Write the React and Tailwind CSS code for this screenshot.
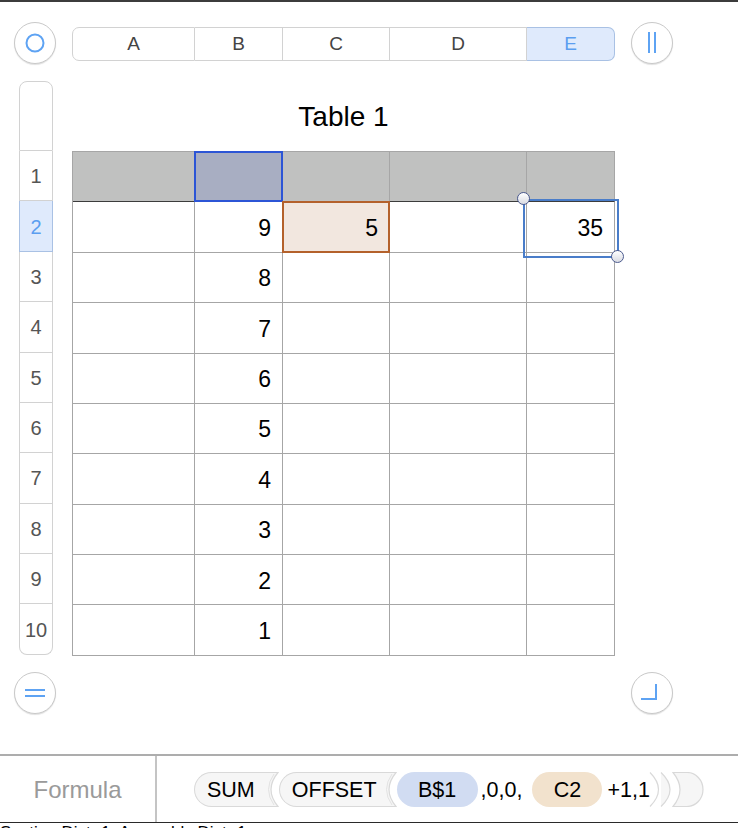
import React from "react";

const cols = [
  { key: "A", w: 123 },
  { key: "B", w: 88 },
  { key: "C", w: 107 },
  { key: "D", w: 137 },
  { key: "E", w: 88 },
];

const colB = [9, 8, 7, 6, 5, 4, 3, 2, 1];

const CircleButton = ({ children }) => (
  <div className="w-[42px] h-[42px] rounded-full border border-[#c9c9c9] bg-white shadow-[0_1px_1px_rgba(0,0,0,0.12)] flex items-center justify-center shrink-0">
    {children}
  </div>
);

const FuncToken = ({ name, pr }) => (
  <div className="flex items-center">
    <span className={"h-[35px] flex items-center rounded-l-full border border-r-0 border-[#d9d9d9] bg-[#f6f6f6] pl-[12px] " + pr}>
      {name}
    </span>
    <svg width="16" height="35" viewBox="0 0 16 35" className="shrink-0">
      <path d="M0 0.5 L15 0.5 Q1 17.5 15 34.5 L0 34.5 Z" fill="#f6f6f6" />
      <path d="M0 0.5 L15 0.5 Q1 17.5 15 34.5 L0 34.5" fill="none" stroke="#d9d9d9" strokeWidth="1.2" />
      <path d="M11 2 Q0 17.5 11 33" fill="none" stroke="#e2e2e2" strokeWidth="1" />
    </svg>
  </div>
);

const App = () => {
  return (
    <div
      className="w-[738px] h-[828px] bg-white overflow-hidden flex flex-col"
      style={{ fontFamily: '"Liberation Sans", Arial, sans-serif' }}
    >
      <div className="h-[2px] bg-[#3c3c3c]" />

      {/* column header row */}
      <div className="flex items-center mt-[20px] pl-[14px] h-[42px]">
        <CircleButton>
          <svg width="22" height="22" viewBox="0 0 22 22">
            <circle cx="11" cy="11" r="8.5" fill="none" stroke="#5ea3f3" strokeWidth="2" />
          </svg>
        </CircleButton>
        <div className="flex ml-[16px] h-[34px] mt-[2px]">
          {cols.map((c, i) => {
            const sel = c.key === "E";
            return (
              <div
                key={c.key}
                style={{ width: c.w }}
                className={
                  "flex items-center justify-center text-[19px] border-y border-r " +
                  (i === 0 ? "border-l rounded-l-[7px] " : "") +
                  (sel
                    ? "bg-[#dfeafc] border-[#a9c1e4] text-[#5b9ef0] rounded-r-[7px]"
                    : "border-[#d2d2d2] text-[#444]")
                }
              >
                {c.key}
              </div>
            );
          })}
        </div>
        <div className="ml-[16px]">
          <CircleButton>
            <svg width="20" height="24" viewBox="0 0 20 24">
              <line x1="7" y1="1" x2="7" y2="22" stroke="#5ea3f3" strokeWidth="2" />
              <line x1="13" y1="1" x2="13" y2="22" stroke="#5ea3f3" strokeWidth="2" />
            </svg>
          </CircleButton>
        </div>
      </div>

      {/* main area */}
      <div className="flex mt-[17px] pl-[19px]">
        {/* row header */}
        <div className="w-[34px] flex flex-col">
          <div className="h-[70px] border border-[#d2d2d2] rounded-t-[8px]" />
          {Array.from({ length: 10 }).map((_, i) => {
            const sel = i === 1;
            return (
              <div
                key={i}
                className={
                  "h-[50.4px] flex items-center justify-center text-[20px] border-x border-b pt-[1px] " +
                  (sel
                    ? "bg-[#dfeafc] border-[#a9c1e4] text-[#5b9ef0]"
                    : "border-[#d2d2d2] text-[#555]") +
                  (i === 9 ? " rounded-b-[8px]" : "")
                }
              >
                {i + 1}
              </div>
            );
          })}
        </div>

        {/* table */}
        <div className="ml-[19px] w-[543px] flex flex-col">
          <div className="h-[70px] flex items-center justify-center text-[28px] text-black pt-[2px]">
            Table 1
          </div>
          <div className="relative border-l border-t border-[#a6a6a6]">
            {/* header row */}
            <div className="flex">
              {cols.map((c, i) => (
                <div
                  key={c.key}
                  style={{ width: i === 0 ? c.w - 1 : c.w }}
                  className="relative h-[50.4px] bg-[#c0c1c0] border-r border-r-[#a6a6a6] border-b border-b-[#3c3c3c]"
                >
                  {c.key === "B" && (
                    <div className="absolute -left-[1px] -top-[1px] -right-[1px] -bottom-[1px] border-2 border-[#2c55d6] bg-[#a8aec2]" />
                  )}
                </div>
              ))}
            </div>
            {colB.map((v, r) => (
              <div key={r} className="flex">
                {cols.map((c, i) => {
                  let text = "";
                  if (c.key === "B") text = v;
                  if (r === 0 && c.key === "C") text = 5;
                  if (r === 0 && c.key === "E") text = 35;
                  const ref = r === 0 && c.key === "C";
                  return (
                    <div
                      key={c.key}
                      style={{ width: i === 0 ? c.w - 1 : c.w }}
                      className="relative h-[50.4px] border-r border-b border-[#a6a6a6] flex items-center justify-end pr-[11px] pt-[2px] text-[23px] text-black"
                    >
                      {ref && (
                        <div className="absolute -left-[1px] -top-[1px] -right-[1px] -bottom-[1px] border-2 border-[#b4612b] bg-[#f2e7df]" />
                      )}
                      <span className="relative">{text}</span>
                    </div>
                  );
                })}
              </div>
            ))}

            {/* selection on E2 */}
            <div className="absolute left-[450px] top-[47px] w-[96px] h-[59px] border-2 border-[#4a7dc9]" />
            <div className="absolute left-[444px] top-[40px] w-[13px] h-[13px] rounded-full border-[1.5px] border-[#4b5a8e] bg-gradient-to-b from-white to-[#d9dbe3]" />
            <div className="absolute left-[538px] top-[98px] w-[13px] h-[13px] rounded-full border-[1.5px] border-[#4b5a8e] bg-gradient-to-b from-white to-[#d9dbe3]" />
          </div>
        </div>
      </div>

      {/* bottom buttons */}
      <div className="flex items-center mt-[16px] pl-[14px]">
        <CircleButton>
          <svg width="22" height="22" viewBox="0 0 22 22">
            <line x1="1" y1="8" x2="21" y2="8" stroke="#5ea3f3" strokeWidth="2" />
            <line x1="1" y1="14" x2="21" y2="14" stroke="#5ea3f3" strokeWidth="2" />
          </svg>
        </CircleButton>
        <div className="ml-[575px]">
          <CircleButton>
            <svg width="22" height="22" viewBox="0 0 22 22">
              <path d="M15 2 V17 H0" fill="none" stroke="#5ea3f3" strokeWidth="2" />
            </svg>
          </CircleButton>
        </div>
      </div>

      {/* formula bar */}
      <div className="mt-[40px] h-[70px] border-t-2 border-[#adadad] flex">
        <div className="w-[157px] border-r-2 border-[#c4c4c4] flex items-center justify-center text-[24px] text-[#9a9a9a] pt-[2px]">
          Formula
        </div>
        <div className="flex items-center pl-[37px] text-[21.5px] text-black pt-[2px]">
          <FuncToken name="SUM" pr="pr-[8px]" />
          <FuncToken name="OFFSET" pr="pr-[4px]" />
          <span className="h-[35px] w-[81px] flex items-center justify-center rounded-full bg-[#d1dcf2]">
            B$1
          </span>
          <span className="ml-[3px] mr-[10px]">,0,0,</span>
          <span className="h-[35px] w-[70px] flex items-center justify-center rounded-full bg-[#f2e2cd]">
            C2
          </span>
          <span className="ml-[5px]">+1,1</span>
          <svg width="56" height="35" viewBox="0 0 56 35" className="shrink-0 -ml-[1px]">
            <path d="M24 0.5 H38 A 16 17 0 0 1 38 34.5 H24 Q38 17.5 24 0.5 Z" fill="#f6f6f6" stroke="#d9d9d9" strokeWidth="1.2" />
            <path d="M12 0.5 Q30 17.5 12 34.5" fill="#f6f6f6" stroke="#d9d9d9" strokeWidth="1.2" />
            <path d="M1 0.5 Q18 17.5 1 34.5" fill="none" stroke="#d9d9d9" strokeWidth="1.2" />
          </svg>
        </div>
      </div>

      <div className="h-[6px] border-t border-[#2a2a2a] overflow-hidden bg-white">
        <div className="text-[17px] leading-none text-black mt-[1px] whitespace-nowrap">
          Section Distr 1, Assembly Distr 1
        </div>
      </div>
    </div>
  );
};

export default App;
